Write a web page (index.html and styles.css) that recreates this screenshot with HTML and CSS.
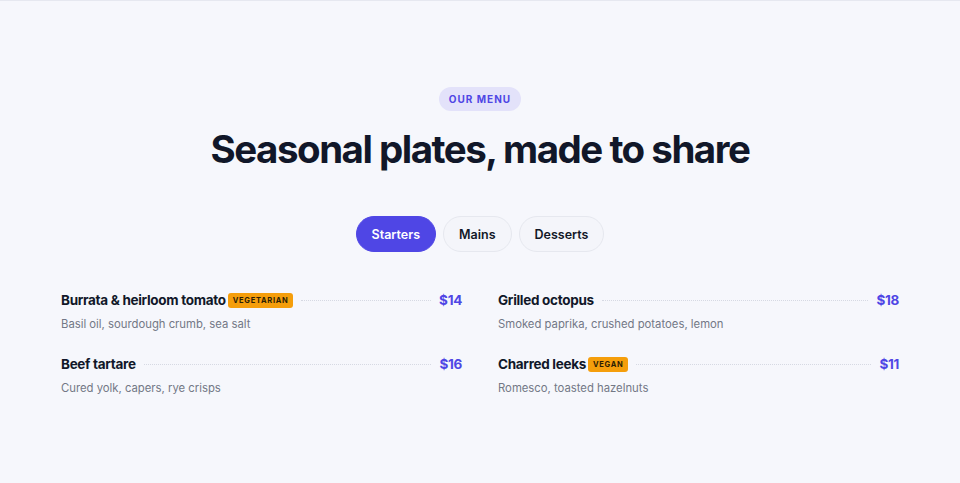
FILE: index.html
```html
<!DOCTYPE html>
<html lang="en">
<head>
<meta charset="utf-8">
<title>Our menu</title>
<link rel="stylesheet" href="styles.css">
</head>
<body>
<section class="menu">
  <div class="eyebrow">OUR MENU</div>
  <h1 class="title">Seasonal plates, made to share</h1>
  <div class="tabs">
    <button class="tab tab-active">Starters</button>
    <button class="tab">Mains</button>
    <button class="tab">Desserts</button>
  </div>
  <div class="grid">
    <div class="item">
      <div class="item-head">
        <span class="name">Burrata &amp; heirloom tomato</span>
        <span class="tag">VEGETARIAN</span>
        <span class="leader"></span>
        <span class="price">$14</span>
      </div>
      <div class="desc">Basil oil, sourdough crumb, sea salt</div>
    </div>
    <div class="item">
      <div class="item-head">
        <span class="name">Grilled octopus</span>
        <span class="leader"></span>
        <span class="price">$18</span>
      </div>
      <div class="desc">Smoked paprika, crushed potatoes, lemon</div>
    </div>
    <div class="item">
      <div class="item-head">
        <span class="name">Beef tartare</span>
        <span class="leader"></span>
        <span class="price">$16</span>
      </div>
      <div class="desc">Cured yolk, capers, rye crisps</div>
    </div>
    <div class="item">
      <div class="item-head">
        <span class="name">Charred leeks</span>
        <span class="tag">VEGAN</span>
        <span class="leader"></span>
        <span class="price">$11</span>
      </div>
      <div class="desc">Romesco, toasted hazelnuts</div>
    </div>
  </div>
</section>
</body>
</html>
```
FILE: styles.css
```css
* { box-sizing: border-box; }
html, body { margin: 0; padding: 0; }
body {
  background: #f6f7fc;
  font-family: Inter, "Noto Sans", sans-serif;
  color: #111827;
  border-top: 1px solid #e6e8f0;
  min-height: 483px;
}
.menu {
  display: flex;
  flex-direction: column;
  align-items: center;
  padding-top: 86px;
}
.eyebrow {
  height: 24px;
  padding: 0 10px;
  border-radius: 12px;
  background: #e3e2fa;
  color: #4f46e5;
  font-size: 10px;
  font-weight: 700;
  letter-spacing: 1px;
  display: flex;
  align-items: center;
}
.title {
  margin: 14px 0 0;
  font-size: 38.5px;
  line-height: 48px;
  font-weight: 700;
  letter-spacing: -1.5px;
  color: #111729;
}
.tabs {
  display: flex;
  gap: 7px;
  margin-top: 43px;
}
.tab {
  height: 36px;
  padding: 0 15px;
  border-radius: 18px;
  border: 1px solid #e6e8ef;
  background: #f4f5fa;
  font-family: Inter, sans-serif;
  font-size: 12.5px;
  font-weight: 600;
  color: #111827;
}
.tab-active {
  background: #4f46e5;
  border-color: #4f46e5;
  color: #fff;
}
.grid {
  margin-top: 38px;
  width: 838px;
  display: grid;
  grid-template-columns: 1fr 1fr;
  column-gap: 36px;
  row-gap: 22px;
}
.item-head {
  display: flex;
  align-items: center;
  height: 20px;
}
.name {
  font-size: 13.5px;
  font-weight: 700;
  letter-spacing: -0.3px;
  color: #111729;
  white-space: nowrap;
}
.tag {
  margin-left: 2px;
  background: #f59e0b;
  color: #2b1d04;
  font-size: 7.5px;
  font-weight: 700;
  letter-spacing: 0.7px;
  padding: 0 5px;
  height: 15px;
  line-height: 15px;
  border-radius: 3px;
}
.leader {
  flex: 1;
  margin: 0 8px;
  border-top: 1px dotted #d6d9e3;
  height: 0;
}
.price {
  font-size: 13.5px;
  font-weight: 700;
  color: #4f46e5;
  letter-spacing: -0.3px;
}
.desc {
  margin-top: 6px;
  font-size: 11.3px;
  color: #737886;
  line-height: 16px;
}
```
